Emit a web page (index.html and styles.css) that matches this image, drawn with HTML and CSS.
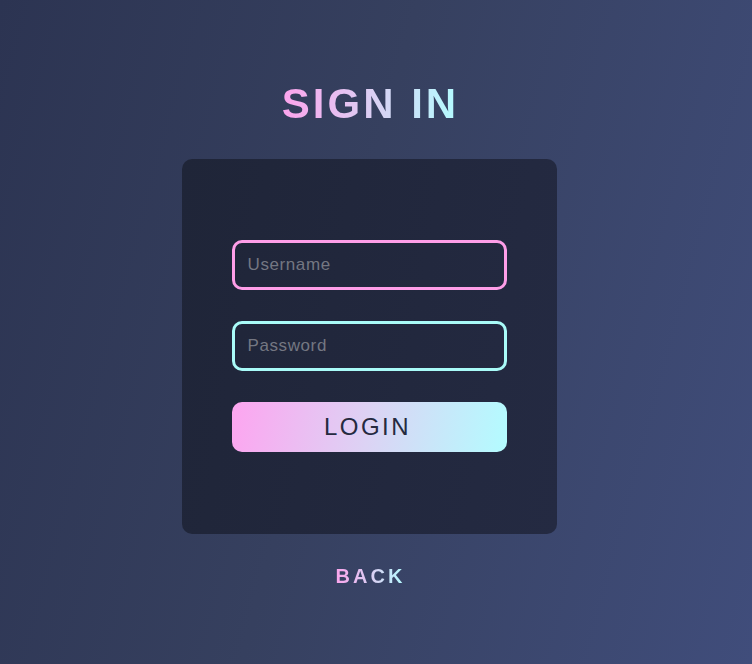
FILE: index.html
```html
<!DOCTYPE html>
<html lang="en">
<head>
    <meta charset="UTF-8">
    <meta name="viewport" content="width=device-width, initial-scale=1.0">
    <title>Sign In</title>
    <link rel="stylesheet" href="styles.css">
</head>
<body>

    <h1 class="title">SIGN IN</h1>

    <form class="login-card" onsubmit="return false;">
        <input type="text" class="field field-user" placeholder="Username" />
        <input type="password" class="field field-pass" placeholder="Password" />
        <button type="submit" class="login-btn">LOGIN</button>
    </form>

    <a href="#" class="back-link">BACK</a>

</body>
</html>
```

FILE: styles.css
```css
body {
    margin: 0;
    padding: 4px 14px 0 0;
    box-sizing: border-box;
    font-family: 'Liberation Sans', Arial, sans-serif;
    display: flex;
    flex-direction: column;
    justify-content: center;
    align-items: center;
    height: 100vh;
    background: linear-gradient(105deg, #2c3452 0%, #36405f 45%, #404d7b 100%);
    overflow: hidden;
}

.title {
    margin: 0 0 31px 0;
    font-size: 42px;
    font-weight: bold;
    letter-spacing: 3px;
    line-height: 48px;
    padding-left: 3px;
    background: linear-gradient(90deg, #fda2ec, #d9d2f4 55%, #b3fcff);
    -webkit-background-clip: text;
    background-clip: text;
    color: transparent;
}

.login-card {
    width: 375px;
    height: 375px;
    box-sizing: border-box;
    padding: 0 50px 2px 50px;
    border-radius: 10px;
    background: linear-gradient(100deg, #1f2538, #242a42);
    display: flex;
    flex-direction: column;
    justify-content: center;
    gap: 31px;
}

.field {
    height: 50px;
    box-sizing: border-box;
    border-radius: 10px;
    background: transparent;
    padding: 0 13px;
    font-family: 'Liberation Sans', Arial, sans-serif;
    font-size: 17px;
    letter-spacing: 0.6px;
    color: #ddd;
    outline: none;
}

.field::placeholder {
    color: #747782;
}

.field-user {
    border: 3px solid #fe9ee8;
}

.field-pass {
    border: 3px solid #a9fbf8;
}

.login-btn {
    height: 50px;
    border: none;
    border-radius: 10px;
    background: linear-gradient(100deg, #fda5f0, #dcd3f4 50%, #b3fcff);
    color: #252a40;
    font-family: 'Liberation Sans', Arial, sans-serif;
    font-size: 24px;
    letter-spacing: 2.5px;
    padding-left: 3px;
    cursor: pointer;
}

.back-link {
    margin-top: 31px;
    font-size: 20px;
    font-weight: bold;
    letter-spacing: 3px;
    padding-left: 3px;
    text-decoration: none;
    background: linear-gradient(90deg, #fda2ec, #d6d4f4 60%, #b3fcff);
    -webkit-background-clip: text;
    background-clip: text;
    color: transparent;
}
```
